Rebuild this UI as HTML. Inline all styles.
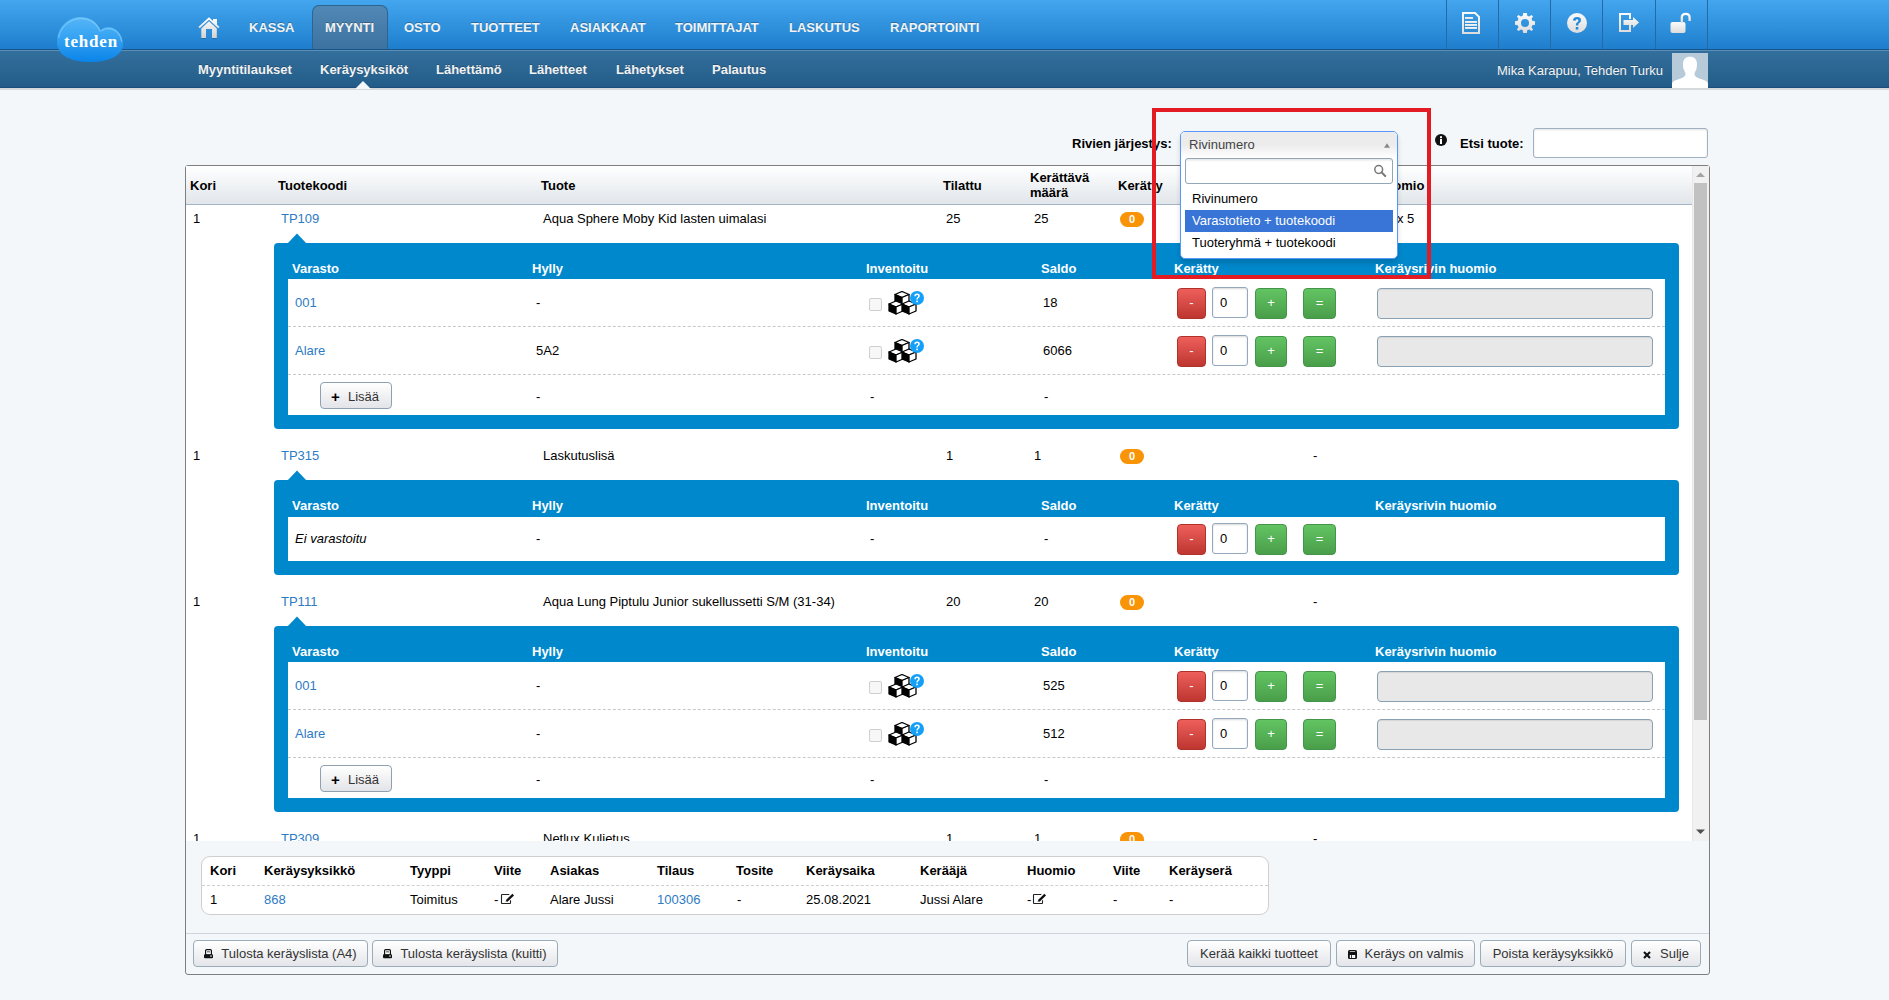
<!DOCTYPE html><html><head><meta charset="utf-8"><title>Keräysyksiköt</title><style>
*{margin:0;padding:0;box-sizing:border-box}
html,body{width:1889px;height:1000px;overflow:hidden;background:#f4f7fa;font-family:"Liberation Sans",sans-serif;font-size:13px;color:#000}
.t{position:absolute;white-space:nowrap;line-height:16px;font-size:13px}
.b{font-weight:bold}
.w{color:#fff}
.lk{color:#2d7bc4}
.nav{color:#f2f2f2;font-weight:bold;text-shadow:0 -1px 0 rgba(0,0,0,.25)}
.abs{position:absolute}
</style></head><body>
<div style="position:absolute;left:0px;top:0px;width:1889px;height:49px;background:linear-gradient(#43a6ee,#1e7ecd)"></div>
<div style="position:absolute;left:0px;top:49px;width:1889px;height:1px;background:#16548a"></div>
<div style="position:absolute;left:0px;top:50px;width:1889px;height:38px;background:linear-gradient(#34709d,#225b88)"></div>
<div style="position:absolute;left:0px;top:50px;width:1889px;height:1px;background:#5a8fb8"></div>
<div style="position:absolute;left:0px;top:87px;width:1889px;height:1px;background:#1b4e7a"></div>
<div style="position:absolute;left:0px;top:88px;width:1889px;height:2px;background:#d6d9dc"></div>
<div style="position:absolute;left:312px;top:5px;width:76px;height:44px;background:linear-gradient(#5188b5,#3b72a0);border:1px solid #2c6592;border-bottom:none;border-radius:7px 7px 0 0"></div>
<div class="t nav" style="left:249px;top:20px;">KASSA</div>
<div class="t nav" style="left:325px;top:20px;">MYYNTI</div>
<div class="t nav" style="left:404px;top:20px;">OSTO</div>
<div class="t nav" style="left:471px;top:20px;">TUOTTEET</div>
<div class="t nav" style="left:570px;top:20px;">ASIAKKAAT</div>
<div class="t nav" style="left:675px;top:20px;">TOIMITTAJAT</div>
<div class="t nav" style="left:789px;top:20px;">LASKUTUS</div>
<div class="t nav" style="left:890px;top:20px;">RAPORTOINTI</div>
<div class="t nav" style="left:198px;top:62px;">Myyntitilaukset</div>
<div class="t nav" style="left:320px;top:62px;">Keräysyksiköt</div>
<div class="t nav" style="left:436px;top:62px;">Lähettämö</div>
<div class="t nav" style="left:529px;top:62px;">Lähetteet</div>
<div class="t nav" style="left:616px;top:62px;">Lähetykset</div>
<div class="t nav" style="left:712px;top:62px;">Palautus</div>
<svg class="abs" style="left:355px;top:81px" width="16" height="8"><polygon points="0,8 8,0 16,8" fill="#f4f7fa"/></svg>
<div class="t " style="left:1497px;top:63px;color:#f4f4f4;text-shadow:0 -1px 0 rgba(0,0,0,.2)">Mika Karapuu, Tehden Turku</div>
<svg class="abs" style="left:1672px;top:53px" width="36" height="35"><rect width="36" height="35" fill="#b7cad9"/><path d="M18 3.8 C22.5 3.8 25 6.5 25 11 C25 14 24.5 17 23 19 C22.5 20 22.5 21.5 22.8 22.5 C24 24.5 27 25.5 31 26.8 C34 27.7 36 29 36 31 L36 35 L0 35 L0 31 C0 29 2 27.7 5 26.8 C9 25.5 12 24.5 13.2 22.5 C13.5 21.5 13.5 20 13 19 C11.5 17 11 14 11 11 C11 6.5 13.5 3.8 18 3.8Z" fill="#fff"/></svg>
<div style="position:absolute;left:1446px;top:0px;width:1px;height:49px;background:#2569a5"></div>
<div style="position:absolute;left:1498px;top:0px;width:1px;height:49px;background:#2569a5"></div>
<div style="position:absolute;left:1550px;top:0px;width:1px;height:49px;background:#2569a5"></div>
<div style="position:absolute;left:1602px;top:0px;width:1px;height:49px;background:#2569a5"></div>
<div style="position:absolute;left:1655px;top:0px;width:1px;height:49px;background:#2569a5"></div>
<div style="position:absolute;left:1707px;top:0px;width:1px;height:49px;background:#2569a5"></div>
<svg class="abs" style="left:50px;top:10px" width="80" height="60" viewBox="50 10 80 60">
<defs><linearGradient id="cg" gradientUnits="userSpaceOnUse" x1="0" y1="17" x2="0" y2="62"><stop offset="0" stop-color="#56b6f8"/><stop offset="0.45" stop-color="#36a3f2"/><stop offset="1" stop-color="#0a84e8"/></linearGradient></defs>
<path d="M57 42 C57 27 68 17 81 17 C90 17 97 22 100.5 30 C103 28 105.5 27 108 27 C117 27 123 35 123 44 C123 55 110 62 90 62 C70 62 57 55 57 42 Z" fill="url(#cg)"/>
<path d="M58.5 38 C60 27 70 18.5 81 18.5 C90 18.5 96.5 23 100.3 31.5" fill="none" stroke="#86cffa" stroke-width="1.3" opacity=".65"/>
<path d="M101 31 C103.5 29.3 106 28.5 108 28.5 C116 28.5 121 35 121.8 42" fill="none" stroke="#86cffa" stroke-width="1.3" opacity=".65"/>
</svg>
<div class="t" style="left:64px;top:32px;font-family:&quot;Liberation Serif&quot;,serif;font-size:17px;line-height:20px;color:#fff;font-weight:bold;letter-spacing:0.8px">tehden</div>
<svg class="abs" style="left:192px;top:10px" width="36" height="34" viewBox="192 10 36 34">
<defs><linearGradient id="hg" gradientUnits="userSpaceOnUse" x1="0" y1="18" x2="0" y2="38"><stop offset="0" stop-color="#ffffff"/><stop offset="1" stop-color="#d2d2d2"/></linearGradient></defs>
<path d="M213 19 L217 19 L217 25.5 L213 21.8Z" fill="url(#hg)"/>
<path d="M199.2 28 L209 19.6 L218.8 28" fill="none" stroke="#1d5f98" stroke-width="1" opacity=".85"/>
<path d="M199.8 27 L209 18.6 L218.2 27" fill="none" stroke="url(#hg)" stroke-width="1.9" stroke-linecap="square"/>
<path d="M201.3 28.4 L209 21.3 L216.8 28.4 L216.8 38 L212 38 L212 29 L206 29 L206 38 L201.3 38Z" fill="url(#hg)"/>
<path d="M201.3 38.6 L206 38.6 M212 38.6 L216.8 38.6" stroke="#1d5f98" stroke-width="1" opacity=".6"/>
</svg>
<svg class="abs" style="left:1455px;top:5px" width="260" height="32" viewBox="1455 5 260 32">
<defs><linearGradient id="ig" x1="0" y1="0" x2="0" y2="1"><stop offset="0" stop-color="#fbfbfb"/><stop offset="1" stop-color="#dcdcdc"/></linearGradient></defs>
<g fill="url(#ig)">
<path d="M1462 12 L1475.5 12 L1480 16.5 L1480 34 L1462 34Z M1464 14 L1464 32 L1478 32 L1478 17.3 L1474.7 14Z" fill-rule="evenodd"/>
<rect x="1465" y="17" width="8" height="2"/><rect x="1465" y="21" width="12" height="2"/><rect x="1465" y="24" width="12" height="2"/><rect x="1465" y="27" width="12" height="2"/>
</g>
<g transform="translate(1525 23)"><path fill="url(#ig)" fill-rule="evenodd" d="M-1.8 -10 L1.8 -10 L2.3 -7.3 L4.2 -6.5 L6.5 -8.1 L8.1 -6.5 L6.5 -4.2 L7.3 -2.3 L10 -1.8 L10 1.8 L7.3 2.3 L6.5 4.2 L8.1 6.5 L6.5 8.1 L4.2 6.5 L2.3 7.3 L1.8 10 L-1.8 10 L-2.3 7.3 L-4.2 6.5 L-6.5 8.1 L-8.1 6.5 L-6.5 4.2 L-7.3 2.3 L-10 1.8 L-10 -1.8 L-7.3 -2.3 L-6.5 -4.2 L-8.1 -6.5 L-6.5 -8.1 L-4.2 -6.5 L-2.3 -7.3Z M4 0 A4 4 0 1 0 -4 0 A4 4 0 1 0 4 0Z"/></g>
<circle cx="1577" cy="23" r="10" fill="url(#ig)"/>
<path d="M1573 20.5 Q1573 17 1577 17 Q1581 17 1581 20.3 Q1581 22.3 1579 23.3 Q1578.3 23.8 1578.3 25.6 L1575.8 25.6 Q1575.8 22.8 1577.5 22 Q1578.4 21.5 1578.4 20.5 Q1578.4 19.3 1577 19.3 Q1575.6 19.3 1575.6 20.8Z" fill="#258ad8"/>
<rect x="1575.8" y="27" width="2.5" height="2.6" fill="#258ad8"/>
<g fill="url(#ig)">
<path d="M1619 13 L1631 13 L1631 19 L1629 19 L1629 15 L1621 15 L1621 30 L1629 30 L1629 25 L1631 25 L1631 32 L1619 32Z"/>
<path d="M1623.5 20 L1633 20 L1633 17 L1639 22.5 L1633 28 L1633 25 L1623.5 25Z"/>
<rect x="1670.5" y="22" width="15" height="11" rx="2"/>
</g>
<path d="M1681.8 23 L1681.8 17.5 Q1681.8 13.8 1685.7 13.8 Q1689.6 13.8 1689.6 17.5 L1689.6 21" fill="none" stroke="url(#ig)" stroke-width="2.3"/>
</svg>
<div class="t b" style="left:1072px;top:136px;">Rivien järjestys:</div>
<svg class="abs" style="left:1435px;top:134px" width="12" height="12" viewBox="0 0 12 12"><circle cx="6" cy="6" r="6" fill="#111"/><rect x="5" y="5" width="2" height="5" fill="#fff"/><rect x="5" y="2.2" width="2" height="2" fill="#fff"/></svg>
<div class="t b" style="left:1460px;top:136px;">Etsi tuote:</div>
<div style="position:absolute;left:1533px;top:128px;width:175px;height:30px;background:#fff;border:1px solid #9fb1c2;border-radius:3px;box-shadow:inset 0 1px 2px rgba(0,0,0,.12)"></div>
<div style="position:absolute;left:185px;top:165px;width:1525px;height:810px;background:#f4f7fa;border:1px solid #7f7f7f;border-radius:3px"></div>
<div class="abs" style="left:186px;top:166px;width:1523px;height:675px;overflow:hidden;background:#fff">
<div class="abs" style="left:0;top:0;width:1506px;height:39px;background:linear-gradient(#fff,#e1e6ea);border-bottom:1px solid #a3b5c6"></div>
<div class="t b" style="left:4px;top:12px;">Kori</div>
<div class="t b" style="left:92px;top:12px;">Tuotekoodi</div>
<div class="t b" style="left:355px;top:12px;">Tuote</div>
<div class="t b" style="left:757px;top:12px;">Tilattu</div>
<div class="t b" style="left:844px;top:4px;line-height:15px">Kerättävä<br>määrä</div>
<div class="t b" style="left:932px;top:12px;">Kerätty</div>
<div class="t b" style="left:1124px;top:12px;">Paino</div>
<div class="t b" style="left:1190px;top:12px;">Huomio</div>
<div class="t " style="left:7px;top:45px;">1</div>
<div class="t lk" style="left:95px;top:45px;">TP109</div>
<div class="t " style="left:357px;top:45px;">Aqua Sphere Moby Kid lasten uimalasi</div>
<div class="t " style="left:760px;top:45px;">25</div>
<div class="t " style="left:848px;top:45px;">25</div>
<div class="abs" style="left:934px;top:46px;width:24px;height:15px;background:#f89406;border-radius:8px"></div>
<div class="t b w" style="left:934px;top:46px;width:24px;text-align:center;font-size:11px;line-height:15px">0</div>
<div class="t " style="left:1211px;top:45px;">x 5</div>
<svg class="abs" style="left:101px;top:67px" width="20" height="11"><polygon points="0,11 10,0.5 20,11" fill="#0088cc"/></svg>
<div class="abs" style="left:88px;top:77px;width:1405px;height:186px;background:#0088cc;border-radius:4px"></div>
<div class="t b w" style="left:106px;top:95px;">Varasto</div>
<div class="t b w" style="left:346px;top:95px;">Hylly</div>
<div class="t b w" style="left:680px;top:95px;">Inventoitu</div>
<div class="t b w" style="left:855px;top:95px;">Saldo</div>
<div class="t b w" style="left:988px;top:95px;">Kerätty</div>
<div class="t b w" style="left:1189px;top:95px;">Keräysrivin huomio</div>
<div class="abs" style="left:102px;top:113px;width:1377px;height:136px;background:#fff"></div>
<div class="t lk" style="left:109px;top:129px;">001</div>
<div class="t " style="left:350px;top:129px;">-</div>
<div class="abs" style="left:683px;top:132px;width:13px;height:13px;background:#f7f7f7;border:1px solid #cfcfcf;border-radius:2px"></div>
<svg class="abs" style="left:702px;top:125px" width="36" height="26" viewBox="0 0 36 26">
<g stroke="#000" stroke-width="1.3" stroke-linejoin="round">
<path d="M7 3.5 L14 0.5 L21 3.5 L14 6.5Z" fill="#fff"/><path d="M7 3.5 L14 6.5 L14 13.5 L7 10.5Z" fill="#000"/><path d="M14 6.5 L21 3.5 L21 10.5 L14 13.5Z" fill="#fff"/>
<path d="M1 13 L8 10 L15 13 L8 16Z" fill="#fff"/><path d="M1 13 L8 16 L8 23 L1 20Z" fill="#000"/><path d="M8 16 L15 13 L15 20 L8 23Z" fill="#fff"/>
<path d="M14 13 L21 10 L28 13 L21 16Z" fill="#fff"/><path d="M14 13 L21 16 L21 23 L14 20Z" fill="#000"/><path d="M21 16 L28 13 L28 20 L21 23Z" fill="#fff"/>
</g>
<circle cx="29" cy="7" r="7" fill="#14a0f8"/>
<path d="M26.3 5.3 Q26.3 2.6 29 2.6 Q31.8 2.6 31.8 5 Q31.8 6.5 30.2 7.2 Q29.8 7.5 29.8 8.6 L28.3 8.6 Q28.3 6.8 29.4 6.2 Q30.2 5.8 30.2 5.1 Q30.2 4.1 29 4.1 Q27.9 4.1 27.9 5.3Z" fill="#fff"/>
<rect x="28.3" y="9.6" width="1.6" height="1.6" fill="#fff"/>
</svg>
<div class="t " style="left:857px;top:129px;">18</div>
<div class="abs" style="left:991px;top:122px;width:29px;height:31px;background:linear-gradient(#ee5f5b,#bd362f);border:1px solid #b0302a;border-radius:4px"></div>
<div class="t w" style="left:991px;top:129px;width:29px;text-align:center">-</div>
<div class="abs" style="left:1026px;top:121px;width:36px;height:31px;background:#fff;border:1px solid #93a8bb;border-radius:3px;box-shadow:inset 0 1px 2px rgba(0,0,0,.15)"></div>
<div class="t " style="left:1034px;top:129px;">0</div>
<div class="abs" style="left:1069px;top:122px;width:32px;height:31px;background:linear-gradient(#62c462,#4a9e4a);border:1px solid #44944a;border-radius:4px"></div>
<div class="t w" style="left:1069px;top:129px;width:32px;text-align:center">+</div>
<div class="abs" style="left:1117px;top:122px;width:33px;height:31px;background:linear-gradient(#62c462,#4a9e4a);border:1px solid #44944a;border-radius:4px"></div>
<div class="t w" style="left:1117px;top:129px;width:33px;text-align:center">=</div>
<div class="abs" style="left:1191px;top:122px;width:276px;height:31px;background:#e8e8e8;border:1px solid #8aa0b3;border-radius:4px;box-shadow:inset 0 1px 1px rgba(0,0,0,.08)"></div>
<div class="abs" style="left:102px;top:160px;width:1377px;height:1px;border-top:1px dashed #c8c8c8"></div>
<div class="t lk" style="left:109px;top:177px;">Alare</div>
<div class="t " style="left:350px;top:177px;">5A2</div>
<div class="abs" style="left:683px;top:180px;width:13px;height:13px;background:#f7f7f7;border:1px solid #cfcfcf;border-radius:2px"></div>
<svg class="abs" style="left:702px;top:173px" width="36" height="26" viewBox="0 0 36 26">
<g stroke="#000" stroke-width="1.3" stroke-linejoin="round">
<path d="M7 3.5 L14 0.5 L21 3.5 L14 6.5Z" fill="#fff"/><path d="M7 3.5 L14 6.5 L14 13.5 L7 10.5Z" fill="#000"/><path d="M14 6.5 L21 3.5 L21 10.5 L14 13.5Z" fill="#fff"/>
<path d="M1 13 L8 10 L15 13 L8 16Z" fill="#fff"/><path d="M1 13 L8 16 L8 23 L1 20Z" fill="#000"/><path d="M8 16 L15 13 L15 20 L8 23Z" fill="#fff"/>
<path d="M14 13 L21 10 L28 13 L21 16Z" fill="#fff"/><path d="M14 13 L21 16 L21 23 L14 20Z" fill="#000"/><path d="M21 16 L28 13 L28 20 L21 23Z" fill="#fff"/>
</g>
<circle cx="29" cy="7" r="7" fill="#14a0f8"/>
<path d="M26.3 5.3 Q26.3 2.6 29 2.6 Q31.8 2.6 31.8 5 Q31.8 6.5 30.2 7.2 Q29.8 7.5 29.8 8.6 L28.3 8.6 Q28.3 6.8 29.4 6.2 Q30.2 5.8 30.2 5.1 Q30.2 4.1 29 4.1 Q27.9 4.1 27.9 5.3Z" fill="#fff"/>
<rect x="28.3" y="9.6" width="1.6" height="1.6" fill="#fff"/>
</svg>
<div class="t " style="left:857px;top:177px;">6066</div>
<div class="abs" style="left:991px;top:170px;width:29px;height:31px;background:linear-gradient(#ee5f5b,#bd362f);border:1px solid #b0302a;border-radius:4px"></div>
<div class="t w" style="left:991px;top:177px;width:29px;text-align:center">-</div>
<div class="abs" style="left:1026px;top:169px;width:36px;height:31px;background:#fff;border:1px solid #93a8bb;border-radius:3px;box-shadow:inset 0 1px 2px rgba(0,0,0,.15)"></div>
<div class="t " style="left:1034px;top:177px;">0</div>
<div class="abs" style="left:1069px;top:170px;width:32px;height:31px;background:linear-gradient(#62c462,#4a9e4a);border:1px solid #44944a;border-radius:4px"></div>
<div class="t w" style="left:1069px;top:177px;width:32px;text-align:center">+</div>
<div class="abs" style="left:1117px;top:170px;width:33px;height:31px;background:linear-gradient(#62c462,#4a9e4a);border:1px solid #44944a;border-radius:4px"></div>
<div class="t w" style="left:1117px;top:177px;width:33px;text-align:center">=</div>
<div class="abs" style="left:1191px;top:170px;width:276px;height:31px;background:#e8e8e8;border:1px solid #8aa0b3;border-radius:4px;box-shadow:inset 0 1px 1px rgba(0,0,0,.08)"></div>
<div class="abs" style="left:102px;top:208px;width:1377px;height:1px;border-top:1px dashed #c8c8c8"></div>
<div class="abs" style="left:134px;top:216px;width:72px;height:27px;background:linear-gradient(#fff,#e3e4e8);border:1px solid #8fa1b1;border-radius:4px"></div>
<div class="t b" style="left:145px;top:223px;font-size:15px">+</div>
<div class="t " style="left:162px;top:223px;color:#333">Lisää</div>
<div class="t " style="left:350px;top:223px;">-</div>
<div class="t " style="left:684px;top:223px;">-</div>
<div class="t " style="left:858px;top:223px;">-</div>
<div class="t " style="left:7px;top:282px;">1</div>
<div class="t lk" style="left:95px;top:282px;">TP315</div>
<div class="t " style="left:357px;top:282px;">Laskutuslisä</div>
<div class="t " style="left:760px;top:282px;">1</div>
<div class="t " style="left:848px;top:282px;">1</div>
<div class="abs" style="left:934px;top:283px;width:24px;height:15px;background:#f89406;border-radius:8px"></div>
<div class="t b w" style="left:934px;top:283px;width:24px;text-align:center;font-size:11px;line-height:15px">0</div>
<div class="t " style="left:1127px;top:282px;">-</div>
<svg class="abs" style="left:101px;top:304px" width="20" height="11"><polygon points="0,11 10,0.5 20,11" fill="#0088cc"/></svg>
<div class="abs" style="left:88px;top:314px;width:1405px;height:95px;background:#0088cc;border-radius:4px"></div>
<div class="t b w" style="left:106px;top:332px;">Varasto</div>
<div class="t b w" style="left:346px;top:332px;">Hylly</div>
<div class="t b w" style="left:680px;top:332px;">Inventoitu</div>
<div class="t b w" style="left:855px;top:332px;">Saldo</div>
<div class="t b w" style="left:988px;top:332px;">Kerätty</div>
<div class="t b w" style="left:1189px;top:332px;">Keräysrivin huomio</div>
<div class="abs" style="left:102px;top:351px;width:1377px;height:44px;background:#fff"></div>
<div class="t " style="left:109px;top:365px;font-style:italic">Ei varastoitu</div>
<div class="t " style="left:350px;top:365px;">-</div>
<div class="t " style="left:684px;top:365px;">-</div>
<div class="t " style="left:858px;top:365px;">-</div>
<div class="abs" style="left:991px;top:358px;width:29px;height:31px;background:linear-gradient(#ee5f5b,#bd362f);border:1px solid #b0302a;border-radius:4px"></div>
<div class="t w" style="left:991px;top:365px;width:29px;text-align:center">-</div>
<div class="abs" style="left:1026px;top:357px;width:36px;height:31px;background:#fff;border:1px solid #93a8bb;border-radius:3px;box-shadow:inset 0 1px 2px rgba(0,0,0,.15)"></div>
<div class="t " style="left:1034px;top:365px;">0</div>
<div class="abs" style="left:1069px;top:358px;width:32px;height:31px;background:linear-gradient(#62c462,#4a9e4a);border:1px solid #44944a;border-radius:4px"></div>
<div class="t w" style="left:1069px;top:365px;width:32px;text-align:center">+</div>
<div class="abs" style="left:1117px;top:358px;width:33px;height:31px;background:linear-gradient(#62c462,#4a9e4a);border:1px solid #44944a;border-radius:4px"></div>
<div class="t w" style="left:1117px;top:365px;width:33px;text-align:center">=</div>
<div class="t " style="left:7px;top:428px;">1</div>
<div class="t lk" style="left:95px;top:428px;">TP111</div>
<div class="t " style="left:357px;top:428px;">Aqua Lung Piptulu Junior sukellussetti S/M (31-34)</div>
<div class="t " style="left:760px;top:428px;">20</div>
<div class="t " style="left:848px;top:428px;">20</div>
<div class="abs" style="left:934px;top:429px;width:24px;height:15px;background:#f89406;border-radius:8px"></div>
<div class="t b w" style="left:934px;top:429px;width:24px;text-align:center;font-size:11px;line-height:15px">0</div>
<div class="t " style="left:1127px;top:428px;">-</div>
<svg class="abs" style="left:101px;top:450px" width="20" height="11"><polygon points="0,11 10,0.5 20,11" fill="#0088cc"/></svg>
<div class="abs" style="left:88px;top:460px;width:1405px;height:186px;background:#0088cc;border-radius:4px"></div>
<div class="t b w" style="left:106px;top:478px;">Varasto</div>
<div class="t b w" style="left:346px;top:478px;">Hylly</div>
<div class="t b w" style="left:680px;top:478px;">Inventoitu</div>
<div class="t b w" style="left:855px;top:478px;">Saldo</div>
<div class="t b w" style="left:988px;top:478px;">Kerätty</div>
<div class="t b w" style="left:1189px;top:478px;">Keräysrivin huomio</div>
<div class="abs" style="left:102px;top:496px;width:1377px;height:136px;background:#fff"></div>
<div class="t lk" style="left:109px;top:512px;">001</div>
<div class="t " style="left:350px;top:512px;">-</div>
<div class="abs" style="left:683px;top:515px;width:13px;height:13px;background:#f7f7f7;border:1px solid #cfcfcf;border-radius:2px"></div>
<svg class="abs" style="left:702px;top:508px" width="36" height="26" viewBox="0 0 36 26">
<g stroke="#000" stroke-width="1.3" stroke-linejoin="round">
<path d="M7 3.5 L14 0.5 L21 3.5 L14 6.5Z" fill="#fff"/><path d="M7 3.5 L14 6.5 L14 13.5 L7 10.5Z" fill="#000"/><path d="M14 6.5 L21 3.5 L21 10.5 L14 13.5Z" fill="#fff"/>
<path d="M1 13 L8 10 L15 13 L8 16Z" fill="#fff"/><path d="M1 13 L8 16 L8 23 L1 20Z" fill="#000"/><path d="M8 16 L15 13 L15 20 L8 23Z" fill="#fff"/>
<path d="M14 13 L21 10 L28 13 L21 16Z" fill="#fff"/><path d="M14 13 L21 16 L21 23 L14 20Z" fill="#000"/><path d="M21 16 L28 13 L28 20 L21 23Z" fill="#fff"/>
</g>
<circle cx="29" cy="7" r="7" fill="#14a0f8"/>
<path d="M26.3 5.3 Q26.3 2.6 29 2.6 Q31.8 2.6 31.8 5 Q31.8 6.5 30.2 7.2 Q29.8 7.5 29.8 8.6 L28.3 8.6 Q28.3 6.8 29.4 6.2 Q30.2 5.8 30.2 5.1 Q30.2 4.1 29 4.1 Q27.9 4.1 27.9 5.3Z" fill="#fff"/>
<rect x="28.3" y="9.6" width="1.6" height="1.6" fill="#fff"/>
</svg>
<div class="t " style="left:857px;top:512px;">525</div>
<div class="abs" style="left:991px;top:505px;width:29px;height:31px;background:linear-gradient(#ee5f5b,#bd362f);border:1px solid #b0302a;border-radius:4px"></div>
<div class="t w" style="left:991px;top:512px;width:29px;text-align:center">-</div>
<div class="abs" style="left:1026px;top:504px;width:36px;height:31px;background:#fff;border:1px solid #93a8bb;border-radius:3px;box-shadow:inset 0 1px 2px rgba(0,0,0,.15)"></div>
<div class="t " style="left:1034px;top:512px;">0</div>
<div class="abs" style="left:1069px;top:505px;width:32px;height:31px;background:linear-gradient(#62c462,#4a9e4a);border:1px solid #44944a;border-radius:4px"></div>
<div class="t w" style="left:1069px;top:512px;width:32px;text-align:center">+</div>
<div class="abs" style="left:1117px;top:505px;width:33px;height:31px;background:linear-gradient(#62c462,#4a9e4a);border:1px solid #44944a;border-radius:4px"></div>
<div class="t w" style="left:1117px;top:512px;width:33px;text-align:center">=</div>
<div class="abs" style="left:1191px;top:505px;width:276px;height:31px;background:#e8e8e8;border:1px solid #8aa0b3;border-radius:4px;box-shadow:inset 0 1px 1px rgba(0,0,0,.08)"></div>
<div class="abs" style="left:102px;top:543px;width:1377px;height:1px;border-top:1px dashed #c8c8c8"></div>
<div class="t lk" style="left:109px;top:560px;">Alare</div>
<div class="t " style="left:350px;top:560px;">-</div>
<div class="abs" style="left:683px;top:563px;width:13px;height:13px;background:#f7f7f7;border:1px solid #cfcfcf;border-radius:2px"></div>
<svg class="abs" style="left:702px;top:556px" width="36" height="26" viewBox="0 0 36 26">
<g stroke="#000" stroke-width="1.3" stroke-linejoin="round">
<path d="M7 3.5 L14 0.5 L21 3.5 L14 6.5Z" fill="#fff"/><path d="M7 3.5 L14 6.5 L14 13.5 L7 10.5Z" fill="#000"/><path d="M14 6.5 L21 3.5 L21 10.5 L14 13.5Z" fill="#fff"/>
<path d="M1 13 L8 10 L15 13 L8 16Z" fill="#fff"/><path d="M1 13 L8 16 L8 23 L1 20Z" fill="#000"/><path d="M8 16 L15 13 L15 20 L8 23Z" fill="#fff"/>
<path d="M14 13 L21 10 L28 13 L21 16Z" fill="#fff"/><path d="M14 13 L21 16 L21 23 L14 20Z" fill="#000"/><path d="M21 16 L28 13 L28 20 L21 23Z" fill="#fff"/>
</g>
<circle cx="29" cy="7" r="7" fill="#14a0f8"/>
<path d="M26.3 5.3 Q26.3 2.6 29 2.6 Q31.8 2.6 31.8 5 Q31.8 6.5 30.2 7.2 Q29.8 7.5 29.8 8.6 L28.3 8.6 Q28.3 6.8 29.4 6.2 Q30.2 5.8 30.2 5.1 Q30.2 4.1 29 4.1 Q27.9 4.1 27.9 5.3Z" fill="#fff"/>
<rect x="28.3" y="9.6" width="1.6" height="1.6" fill="#fff"/>
</svg>
<div class="t " style="left:857px;top:560px;">512</div>
<div class="abs" style="left:991px;top:553px;width:29px;height:31px;background:linear-gradient(#ee5f5b,#bd362f);border:1px solid #b0302a;border-radius:4px"></div>
<div class="t w" style="left:991px;top:560px;width:29px;text-align:center">-</div>
<div class="abs" style="left:1026px;top:552px;width:36px;height:31px;background:#fff;border:1px solid #93a8bb;border-radius:3px;box-shadow:inset 0 1px 2px rgba(0,0,0,.15)"></div>
<div class="t " style="left:1034px;top:560px;">0</div>
<div class="abs" style="left:1069px;top:553px;width:32px;height:31px;background:linear-gradient(#62c462,#4a9e4a);border:1px solid #44944a;border-radius:4px"></div>
<div class="t w" style="left:1069px;top:560px;width:32px;text-align:center">+</div>
<div class="abs" style="left:1117px;top:553px;width:33px;height:31px;background:linear-gradient(#62c462,#4a9e4a);border:1px solid #44944a;border-radius:4px"></div>
<div class="t w" style="left:1117px;top:560px;width:33px;text-align:center">=</div>
<div class="abs" style="left:1191px;top:553px;width:276px;height:31px;background:#e8e8e8;border:1px solid #8aa0b3;border-radius:4px;box-shadow:inset 0 1px 1px rgba(0,0,0,.08)"></div>
<div class="abs" style="left:102px;top:591px;width:1377px;height:1px;border-top:1px dashed #c8c8c8"></div>
<div class="abs" style="left:134px;top:599px;width:72px;height:27px;background:linear-gradient(#fff,#e3e4e8);border:1px solid #8fa1b1;border-radius:4px"></div>
<div class="t b" style="left:145px;top:606px;font-size:15px">+</div>
<div class="t " style="left:162px;top:606px;color:#333">Lisää</div>
<div class="t " style="left:350px;top:606px;">-</div>
<div class="t " style="left:684px;top:606px;">-</div>
<div class="t " style="left:858px;top:606px;">-</div>
<div class="t " style="left:7px;top:665px;">1</div>
<div class="t lk" style="left:95px;top:665px;">TP309</div>
<div class="t " style="left:357px;top:665px;">Netlux Kuljetus</div>
<div class="t " style="left:760px;top:665px;">1</div>
<div class="t " style="left:848px;top:665px;">1</div>
<div class="abs" style="left:934px;top:666px;width:24px;height:15px;background:#f89406;border-radius:8px"></div>
<div class="t b w" style="left:934px;top:666px;width:24px;text-align:center;font-size:11px;line-height:15px">0</div>
<div class="t " style="left:1127px;top:665px;">-</div>
<div class="abs" style="left:1506px;top:0px;width:17px;height:675px;background:#f1f1f1;border-left:1px solid #e8e8e8"></div>
<div class="abs" style="left:1508px;top:17px;width:13px;height:537px;background:#c1c1c1"></div>
<svg class="abs" style="left:1510px;top:6px" width="9" height="6"><polygon points="0,5 4.5,0.5 9,5" fill="#a3a3a3"/></svg>
<svg class="abs" style="left:1510px;top:663px" width="9" height="6"><polygon points="0,0.5 4.5,5 9,0.5" fill="#505050"/></svg>
</div>
<div style="position:absolute;left:201px;top:856px;width:1068px;height:59px;background:#fff;border:1px solid #cfcfcf;border-radius:9px"></div>
<div style="position:absolute;left:202px;top:885px;width:1066px;height:1px;border-top:1px dashed #cfcfcf"></div>
<div class="t b" style="left:210px;top:863px;">Kori</div>
<div class="t b" style="left:264px;top:863px;">Keräysyksikkö</div>
<div class="t b" style="left:410px;top:863px;">Tyyppi</div>
<div class="t b" style="left:494px;top:863px;">Viite</div>
<div class="t b" style="left:550px;top:863px;">Asiakas</div>
<div class="t b" style="left:657px;top:863px;">Tilaus</div>
<div class="t b" style="left:736px;top:863px;">Tosite</div>
<div class="t b" style="left:806px;top:863px;">Keräysaika</div>
<div class="t b" style="left:920px;top:863px;">Kerääjä</div>
<div class="t b" style="left:1027px;top:863px;">Huomio</div>
<div class="t b" style="left:1113px;top:863px;">Viite</div>
<div class="t b" style="left:1169px;top:863px;">Keräyserä</div>
<div class="t " style="left:210px;top:892px;">1</div>
<div class="t lk" style="left:264px;top:892px;">868</div>
<div class="t " style="left:410px;top:892px;">Toimitus</div>
<div class="t " style="left:494px;top:892px;">-</div>
<div class="t " style="left:550px;top:892px;">Alare Jussi</div>
<div class="t lk" style="left:657px;top:892px;">100306</div>
<div class="t " style="left:737px;top:892px;">-</div>
<div class="t " style="left:806px;top:892px;">25.08.2021</div>
<div class="t " style="left:920px;top:892px;">Jussi Alare</div>
<div class="t " style="left:1027px;top:892px;">-</div>
<div class="t " style="left:1113px;top:892px;">-</div>
<div class="t " style="left:1169px;top:892px;">-</div>
<svg class="abs" style="left:500px;top:893px" width="16" height="12" viewBox="0 0 16 12"><path d="M9.3 1.5 L2 1.5 Q1.5 1.5 1.5 2 L1.5 10 Q1.5 10.5 2 10.5 L10 10.5 Q10.5 10.5 10.5 10 L10.5 7.3" fill="none" stroke="#222" stroke-width="1.1"/><path d="M6.8 7.8 L13.2 1.6" stroke="#111" stroke-width="2.3"/><path d="M5.6 8.8 L6.2 7 L7.6 8.3Z" fill="#111"/></svg>
<svg class="abs" style="left:1032px;top:893px" width="16" height="12" viewBox="0 0 16 12"><path d="M9.3 1.5 L2 1.5 Q1.5 1.5 1.5 2 L1.5 10 Q1.5 10.5 2 10.5 L10 10.5 Q10.5 10.5 10.5 10 L10.5 7.3" fill="none" stroke="#222" stroke-width="1.1"/><path d="M6.8 7.8 L13.2 1.6" stroke="#111" stroke-width="2.3"/><path d="M5.6 8.8 L6.2 7 L7.6 8.3Z" fill="#111"/></svg>
<div style="position:absolute;left:186px;top:933px;width:1523px;height:1px;background:#cdd6de"></div>
<div style="position:absolute;left:193px;top:940px;width:175px;height:27px;background:linear-gradient(#fff,#e4e5e9);border:1px solid #9aabba;border-radius:4px"></div>
<div class="t" style="left:193px;top:946px;width:175px;text-align:center;color:#333"><svg style="vertical-align:-1px;margin-right:8px" width="9" height="10" viewBox="0 0 9 10"><rect x="1.6" y="0.6" width="5.8" height="5.6" rx="1" fill="#fff" stroke="#111" stroke-width="1.2"/><rect x="3" y="2.4" width="3" height="0.9" fill="#333"/><rect x="0" y="5.3" width="9" height="3.9" rx="1" fill="#111"/><rect x="6" y="6.6" width="2" height="1" rx=".5" fill="#fff"/></svg>Tulosta keräyslista (A4)</div>
<div style="position:absolute;left:372px;top:940px;width:186px;height:27px;background:linear-gradient(#fff,#e4e5e9);border:1px solid #9aabba;border-radius:4px"></div>
<div class="t" style="left:372px;top:946px;width:186px;text-align:center;color:#333"><svg style="vertical-align:-1px;margin-right:8px" width="9" height="10" viewBox="0 0 9 10"><rect x="1.6" y="0.6" width="5.8" height="5.6" rx="1" fill="#fff" stroke="#111" stroke-width="1.2"/><rect x="3" y="2.4" width="3" height="0.9" fill="#333"/><rect x="0" y="5.3" width="9" height="3.9" rx="1" fill="#111"/><rect x="6" y="6.6" width="2" height="1" rx=".5" fill="#fff"/></svg>Tulosta keräyslista (kuitti)</div>
<div style="position:absolute;left:1187px;top:940px;width:144px;height:27px;background:linear-gradient(#fff,#e4e5e9);border:1px solid #9aabba;border-radius:4px"></div>
<div class="t" style="left:1187px;top:946px;width:144px;text-align:center;color:#333">Kerää kaikki tuotteet</div>
<div style="position:absolute;left:1336px;top:940px;width:139px;height:27px;background:linear-gradient(#fff,#e4e5e9);border:1px solid #9aabba;border-radius:4px"></div>
<div class="t" style="left:1336px;top:946px;width:139px;text-align:center;color:#333"><svg style="vertical-align:-1px;margin-right:8px" width="9" height="9" viewBox="0 0 9 9"><rect x="0" y="0" width="9" height="9" rx="1.6" fill="#111"/><rect x="1.8" y="1.2" width="5.4" height="0.8" fill="#ddd"/><rect x="1.8" y="5" width="5.4" height="3" fill="#fff"/><rect x="3" y="5" width="0.8" height="3" fill="#111"/><rect x="5" y="6.2" width="0.6" height="0.6" fill="#999"/></svg>Keräys on valmis</div>
<div style="position:absolute;left:1480px;top:940px;width:146px;height:27px;background:linear-gradient(#fff,#e4e5e9);border:1px solid #9aabba;border-radius:4px"></div>
<div class="t" style="left:1480px;top:946px;width:146px;text-align:center;color:#333">Poista keräysyksikkö</div>
<div style="position:absolute;left:1631px;top:940px;width:70px;height:27px;background:linear-gradient(#fff,#e4e5e9);border:1px solid #9aabba;border-radius:4px"></div>
<div class="t" style="left:1631px;top:946px;width:70px;text-align:center;color:#333"><svg style="vertical-align:-1px;margin-right:9px" width="8" height="8" viewBox="0 0 8 8"><path d="M1 1 L7 7 M7 1 L1 7" stroke="#111" stroke-width="2.1"/></svg>Sulje</div>
<div style="position:absolute;left:1180px;top:131px;width:218px;height:128px;background:#fff;border:1px solid #5897fb;border-radius:5px;box-shadow:0 4px 5px rgba(0,0,0,.15)"></div>
<div style="position:absolute;left:1181px;top:132px;width:216px;height:26px;background:linear-gradient(#ececec 0%,#ececec 50%,#fff 100%);border-radius:4px 4px 0 0"></div>
<div class="t " style="left:1189px;top:137px;color:#444">Rivinumero</div>
<svg class="abs" style="left:1384px;top:143px" width="6" height="5"><polygon points="0,4.7 3,0.3 6,4.7" fill="#888"/></svg>
<div style="position:absolute;left:1185px;top:158px;width:208px;height:26px;background:linear-gradient(#e4e6e8,#fff 3px,#fff);border:1px solid #93a6b5;border-radius:3px"></div>
<svg class="abs" style="left:1373px;top:163px" width="14" height="14" viewBox="0 0 14 14"><circle cx="5.7" cy="6.5" r="3.9" fill="none" stroke="#777" stroke-width="1.5"/><path d="M8.6 9.4 L12.2 13" stroke="#777" stroke-width="2" stroke-linecap="round"/></svg>
<div class="t " style="left:1192px;top:191px;">Rivinumero</div>
<div style="position:absolute;left:1185px;top:210px;width:208px;height:22px;background:#3875d7"></div>
<div class="t w" style="left:1192px;top:213px;">Varastotieto + tuotekoodi</div>
<div class="t " style="left:1192px;top:235px;">Tuoteryhmä + tuotekoodi</div>
<div style="position:absolute;left:1152px;top:108px;width:279px;height:171px;border:4px solid #e31b23"></div>
</body></html>
